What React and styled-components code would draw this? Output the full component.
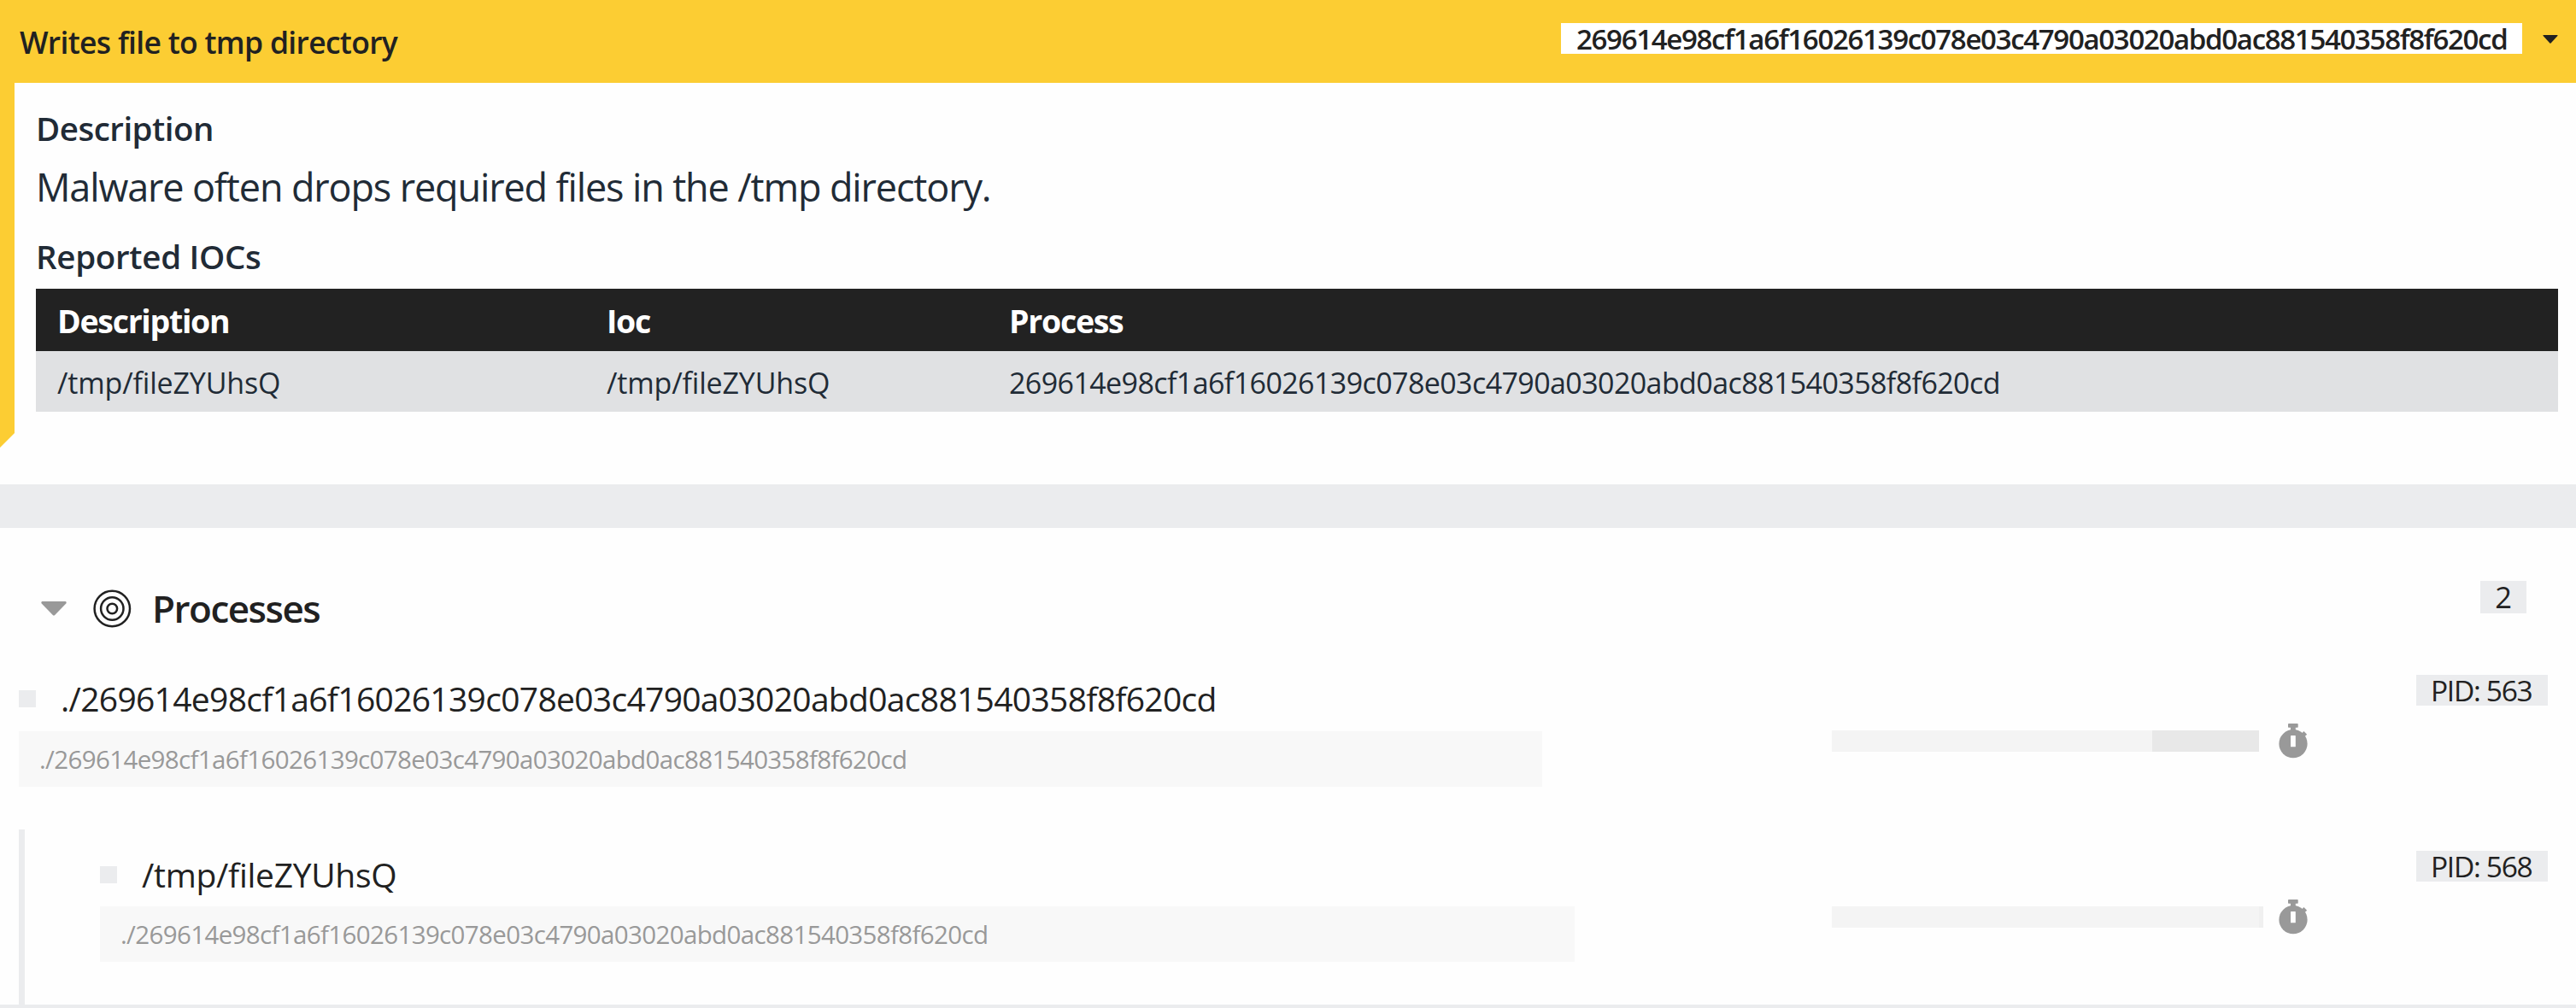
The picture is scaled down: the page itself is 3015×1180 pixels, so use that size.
import React from "react";
import styled, { createGlobalStyle } from "styled-components";

const HASH = "269614e98cf1a6f16026139c078e03c4790a03020abd0ac881540358f8f620cd";

const color = {
  yellow: "#fccd33",
  ink: "#212121",
  slate: "#212b36",
  grey: "#999999",
  band: "#ebecee",
  page: "#fefefe",
};

const GlobalStyle = createGlobalStyle`
  * { box-sizing: border-box; }
  html, body { margin: 0; padding: 0; background: ${color.page}; }
  body {
    font-family: "Open Sans", "Noto Sans", sans-serif;
    color: ${color.ink};
    overflow: hidden;
  }
`;

const Page = styled.div`
  display: flex;
  flex-direction: column;
  width: 100%;
  height: 1180px;
  background: ${color.page};
`;

/* Signature card */

const Signature = styled.section`
  display: flex;
  flex-direction: column;
  height: 567px;
`;

const SignatureHeader = styled.header`
  display: flex;
  justify-content: space-between;
  align-items: flex-start;
  height: 97px;
  padding: 0 21px 0 23px;
  background: ${color.yellow};
`;

const SignatureTitle = styled.h2`
  margin: 0;
  font-size: 35.5px;
  font-weight: 600;
  line-height: 98px;
  letter-spacing: -0.7px;
  white-space: nowrap;
`;

const SignatureActions = styled.div`
  display: flex;
  align-items: flex-start;
  gap: 24px;
  padding-top: 27px;
`;

const HashBadge = styled.span`
  width: 1125px;
  height: 36px;
  padding-left: 18px;
  background: #fff;
  font-size: 33px;
  font-weight: 600;
  line-height: 37px;
  letter-spacing: -1.32px;
  white-space: nowrap;
`;

const MenuCaret = styled.svg`
  display: block;
  width: 18px;
  height: 10px;
  margin-top: 14px;
  fill: ${color.ink};
`;

const SignatureBody = styled.div`
  display: flex;
  align-items: flex-start;
`;

const SeverityEdge = styled.div`
  flex: none;
  width: 17px;
  height: 427px;
  background: ${color.yellow};
  clip-path: polygon(0 0, 100% 0, 100% calc(100% - 17px), 0 100%);
`;

const SignatureContent = styled.div`
  flex: 1;
  padding: 33px 21px 0 25px;
  color: ${color.slate};
`;

const SubHeading = styled.h3`
  margin: 0;
  font-size: 38.5px;
  font-weight: 600;
  line-height: 40px;
  letter-spacing: ${(p) => (p.$tight ? -0.5 : -0.3)}px;
`;

const Paragraph = styled.p`
  margin: 23px 0 36px;
  font-size: 45px;
  line-height: 51px;
  letter-spacing: -1.14px;
`;

const IocTable = styled.div`
  display: flex;
  flex-direction: column;
  margin-top: 18px;
`;

const IocRow = styled.div`
  display: grid;
  grid-template-columns: 643px 471px 1fr;
  height: ${(p) => (p.$head ? 73 : 71)}px;
  background: ${(p) => (p.$head ? "#222222" : "#e0e1e3")};
`;

const IocHead = styled.div`
  padding-left: 25px;
  color: #fff;
  font-size: 37.5px;
  font-weight: 700;
  line-height: 75px;
  letter-spacing: -1.3px;
`;

const IocCell = styled.div`
  padding-left: 25px;
  font-size: 34px;
  line-height: 74px;
  letter-spacing: ${(p) => (p.$long ? -0.59 : -0.17)}px;
  white-space: nowrap;
`;

const Divider = styled.div`
  height: 51px;
  background: ${color.band};
`;

/* Process tree */

const Processes = styled.section`
  display: flex;
  flex-direction: column;
  height: 562px;
  border-bottom: 4px solid ${color.band};
`;

const ProcessesHeader = styled.header`
  display: flex;
  align-items: center;
  height: 172px;
  padding: 16px 58px 0 48px;
`;

const CollapseCaret = styled.svg`
  display: block;
  width: 30px;
  height: 17px;
  margin-right: 31px;
  fill: ${color.grey};
`;

const TargetIcon = styled.svg`
  display: block;
  width: 45px;
  height: 45px;
  margin-right: 24px;
  fill: none;
  stroke: ${color.ink};
  stroke-width: 2.5;
`;

const ProcessesTitle = styled.h2`
  flex: 1;
  margin: 0;
  font-size: 44px;
  font-weight: 600;
  line-height: 60px;
  letter-spacing: -1.5px;
`;

const CountBadge = styled.span`
  align-self: flex-start;
  width: 54px;
  height: 38px;
  margin-top: 46px;
  background: ${color.band};
  font-size: 34.5px;
  line-height: 38px;
  text-align: center;
`;

const ProcessRow = styled.div`
  display: grid;
  grid-template-columns: 1fr 684px 154px;
  padding-right: 33px;
  padding-left: ${(p) => (p.$nested ? 0 : 22)}px;
`;

const ProcessMain = styled.div`
  display: flex;
  flex-direction: column;
  padding-right: ${(p) => (p.$nested ? 301 : 339)}px;
`;

const ProcessName = styled.div`
  display: flex;
  align-items: center;
  gap: 29px;
  height: ${(p) => (p.$nested ? 55 : 56)}px;
  font-size: 39px;
  line-height: 56px;
  letter-spacing: ${(p) => (p.$nested ? -0.28 : -0.69)}px;
  white-space: nowrap;
`;

const Marker = styled.i`
  flex: none;
  width: 20px;
  height: 20px;
  background: ${color.band};
`;

const CommandLine = styled.div`
  height: 65px;
  margin-top: 10px;
  padding-left: 24px;
  background: #f8f8f8;
  color: ${color.grey};
  font-size: 29.5px;
  line-height: 66px;
  letter-spacing: -0.64px;
  white-space: nowrap;
`;

const Timeline = styled.div`
  display: grid;
  grid-template-columns: 523px 34px;
`;

const Track = styled.div`
  display: flex;
  height: 25px;
  margin-top: 65px;
`;

const Segment = styled.div`
  width: ${(p) => p.$width}px;
  background: ${(p) => p.$fill};
`;

const Stopwatch = styled.svg`
  display: block;
  width: 34px;
  height: 41px;
  margin-top: 57px;
`;

const PidBadge = styled.span`
  height: 36px;
  padding-left: 17px;
  background: ${color.band};
  font-size: 33.5px;
  line-height: 36px;
  letter-spacing: -1.3px;
  white-space: nowrap;
`;

const Children = styled.div`
  flex: 1;
  margin: 50px 0 0 22px;
  padding: 25px 0 0 88px;
  border-left: 7px solid ${color.band};
`;

const StopwatchIcon = () => (
  <Stopwatch viewBox="0 0 34 41">
    <g fill={color.grey}>
      <circle cx="17" cy="23.7" r="16.6" />
      <rect x="11" y="0" width="11.7" height="4.8" rx="0.8" />
      <rect x="14" y="3" width="5.8" height="6" />
    </g>
    <path d="M26.5 15.5 31.3 10.8" stroke={color.grey} strokeWidth="5.2" />
    <rect x="14" y="14" width="5.8" height="13.3" rx="0.6" fill={color.page} />
  </Stopwatch>
);

const Process = ({ name, command, pid, segments, nested }) => (
  <ProcessRow $nested={nested}>
    <ProcessMain $nested={nested}>
      <ProcessName $nested={nested}>
        <Marker />
        <span>{name}</span>
      </ProcessName>
      <CommandLine>{command}</CommandLine>
    </ProcessMain>
    <Timeline>
      <Track>
        {segments.map((s) => (
          <Segment key={s.fill} $width={s.width} $fill={s.fill} />
        ))}
      </Track>
      <StopwatchIcon />
    </Timeline>
    <PidBadge>PID: {pid}</PidBadge>
  </ProcessRow>
);

export default function App() {
  return (
    <>
      <GlobalStyle />
      <Page>
        <Signature>
          <SignatureHeader>
            <SignatureTitle>Writes file to tmp directory</SignatureTitle>
            <SignatureActions>
              <HashBadge>{HASH}</HashBadge>
              <MenuCaret viewBox="0 0 18 10">
                <path d="M0.8 0H17.2Q18 0.3 17.4 1L9.6 9.4Q9 10 8.4 9.4L0.6 1Q0 0.3 0.8 0Z" />
              </MenuCaret>
            </SignatureActions>
          </SignatureHeader>
          <SignatureBody>
            <SeverityEdge />
            <SignatureContent>
              <SubHeading $tight>Description</SubHeading>
              <Paragraph>Malware often drops required files in the /tmp directory.</Paragraph>
              <SubHeading>Reported IOCs</SubHeading>
              <IocTable>
                <IocRow $head>
                  <IocHead>Description</IocHead>
                  <IocHead>Ioc</IocHead>
                  <IocHead>Process</IocHead>
                </IocRow>
                <IocRow>
                  <IocCell>/tmp/fileZYUhsQ</IocCell>
                  <IocCell>/tmp/fileZYUhsQ</IocCell>
                  <IocCell $long>{HASH}</IocCell>
                </IocRow>
              </IocTable>
            </SignatureContent>
          </SignatureBody>
        </Signature>
        <Divider />
        <Processes>
          <ProcessesHeader>
            <CollapseCaret viewBox="0 0 30 17">
              <path d="M1.4 0H28.6Q30.4 0.9 29.3 2.4L16.2 16Q15 17 13.8 16L0.7 2.4Q-0.4 0.9 1.4 0Z" />
            </CollapseCaret>
            <TargetIcon viewBox="0 0 45 45">
              <circle cx="22.3" cy="22.5" r="20.7" />
              <circle cx="22.3" cy="22.5" r="13.2" />
              <circle cx="22.3" cy="22.5" r="5.8" />
            </TargetIcon>
            <ProcessesTitle>Processes</ProcessesTitle>
            <CountBadge>2</CountBadge>
          </ProcessesHeader>
          <Process
            name={"./" + HASH}
            command={"./" + HASH}
            pid={563}
            segments={[
              { width: 375, fill: "#f4f4f4" },
              { width: 125, fill: "#e8e8e8" },
            ]}
          />
          <Children>
            <Process
              nested
              name="/tmp/fileZYUhsQ"
              command={"./" + HASH}
              pid={568}
              segments={[
                { width: 500, fill: "#f4f4f4" },
                { width: 5, fill: "#f0f0f0" },
              ]}
            />
          </Children>
        </Processes>
      </Page>
    </>
  );
}
